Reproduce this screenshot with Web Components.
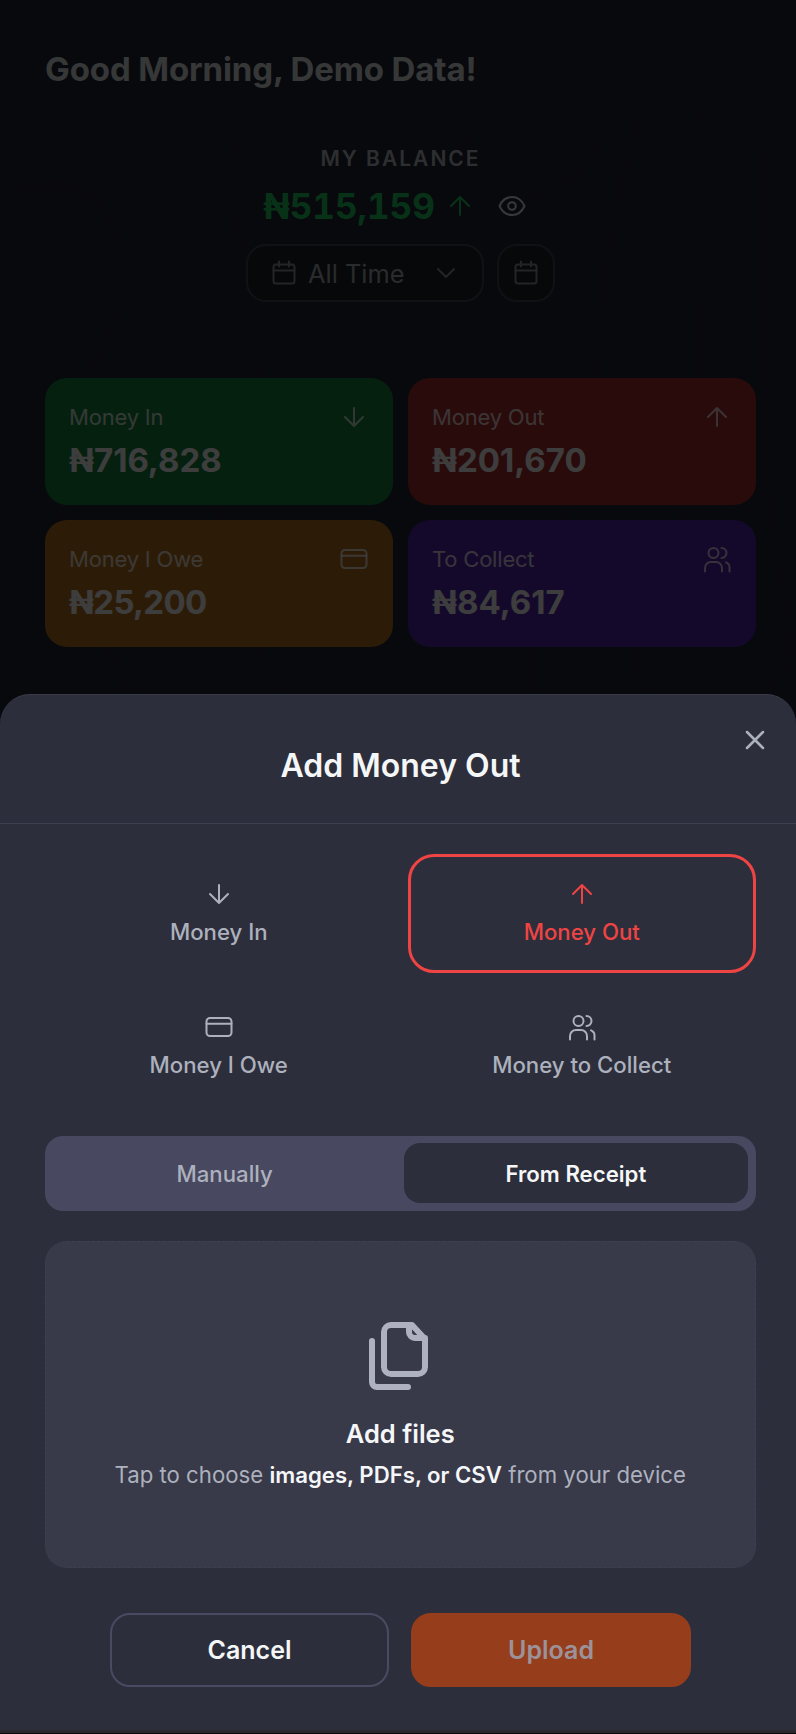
<!DOCTYPE html>
<html lang="en">
<head>
<meta charset="utf-8">
<title>Add Money Out</title>
<style>
  html, body { margin: 0; padding: 0; background: #222537; }
  body { font-family: Inter, "Liberation Sans", sans-serif; }
</style>
</head>
<body>
<fin-app></fin-app>

<script>
const ICONS = {
  "arrow-down": `<path d="M14 5v18M5 14l9 9 9-9"/>`,
  "arrow-up": `<path d="M14 23V5M5 14l9-9 9 9"/>`,
  "card": `<rect x="1.500" y="5" width="25" height="18" rx="3.500"/><path d="M1.500 10.800h25"/>`,
  "users": `<circle cx="10.500" cy="8" r="5"/><path d="M2 26.500v-3.500a6 6 0 0 1 6-6h5a6 6 0 0 1 6 6v3.500"/><path d="M18.500 3a5 5 0 0 1 0 10"/><path d="M23 17.400a5.500 5.500 0 0 1 3.500 5.200v3.900"/>`,
  "calendar": `<rect x="3.500" y="5.500" width="21" height="19" rx="2.500"/><path d="M3.500 11.500h21M9 2.500v5M19 2.500v5"/>`,
  "chevron": `<path d="M6 10l8 8 8-8"/>`,
  "eye": `<path d="M1.500 14C4 8.500 8.500 5 14 5s10 3.500 12.500 9c-2.500 5.500-7 9-12.500 9S4 19.500 1.500 14z"/><circle cx="14" cy="14" r="3.800"/>`,
  "close": `<path d="M6 6l16 16M22 6 6 22"/>`
};

class UiIcon extends HTMLElement {
  connectedCallback() {
    const name = this.getAttribute("name");
    const weight = this.getAttribute("weight") || 2;
    this.attachShadow({ mode: "open" }).innerHTML = `
      <style>
        :host { display: block; width: 28px; height: 28px; flex: none; color: inherit; }
        svg { display: block; width: 100%; height: 100%; fill: none; stroke: currentColor; stroke-linecap: round; stroke-linejoin: round; }
      </style>
      <svg viewBox="0 0 28 28" stroke-width="${weight}">${ICONS[name]}</svg>`;
  }
}
customElements.define("ui-icon", UiIcon);

class StatCard extends HTMLElement {
  connectedCallback() {
    const label = this.getAttribute("label");
    const icon = this.getAttribute("icon");
    const amount = this.getAttribute("amount");
    this.attachShadow({ mode: "open" }).innerHTML = `
      <style>
        :host { display: block; height: 127px; box-sizing: border-box; padding: 25px 25px 24px 24px; border-radius: 22px; background: var(--tone); color: #fff; }
        .top { display: flex; justify-content: space-between; align-items: center; height: 28px; }
        .label { font-size: 22px; line-height: 26px; color: rgba(255,255,255,.8); letter-spacing: -.2px; }
        .amount { margin-top: 9px; font-size: 33px; line-height: 40px; font-weight: 700; color: #f4f4f5; letter-spacing: var(--track, 0); }
        ui-icon { color: rgba(255,255,255,.75); }
      </style>
      <div class="top"><span class="label">${label}</span><ui-icon name="${icon}"></ui-icon></div>
      <div class="amount">${amount}</div>`;
  }
}
customElements.define("stat-card", StatCard);

class DashBoard extends HTMLElement {
  constructor() {
    super();
    this.attachShadow({ mode: "open" }).innerHTML = `
      <style>
        :host { display: block; padding: 49px 40px 0 45px; }
        h1 { margin: 0; font-size: 33px; line-height: 40px; font-weight: 700; color: #d8d9dc; letter-spacing: -.12px; }
        .center { display: flex; flex-direction: column; align-items: center; }
        .caption { margin-top: 57px; font-size: 21px; line-height: 26px; font-weight: 600; letter-spacing: 2px; color: #b4b6bc; }
        .balance { display: flex; align-items: center; margin-top: 13px; height: 42px; }
        .value { font-size: 35px; line-height: 42px; font-weight: 700; color: #22c55e; font-variant-numeric: tabular-nums; }
        .balance .up { color: #22c55e; margin-left: 11px; }
        .balance .eye { color: #dcdde2; padding: 0 12px; margin-left: 12px; }
        .filters { display: flex; gap: 13px; margin-top: 17px; }
        .pill { display: flex; align-items: center; height: 58px; box-sizing: border-box; border: 2px solid #444654; border-radius: 20px; background: #1e2029; color: #a8aab0; }
        .pill ui-icon { color: #8e9096; }
        .select { width: 238px; padding: 0 22px; }
        .select span { margin-left: 10px; flex: 1; font-size: 25.400px; line-height: 32px; padding-top: 1px; }
        .square { width: 58px; justify-content: center; }
        .grid { display: grid; grid-template-columns: 347.500px 347.500px; gap: 15px 15.500px; margin-top: 76px; }
      </style>
      <h1>Good Morning, Demo Data!</h1>
      <div class="center">
        <div class="caption">MY BALANCE</div>
        <div class="balance">
          <span class="value">₦515,159</span>
          <ui-icon class="up" name="arrow-up"></ui-icon>
          <ui-icon class="eye" name="eye"></ui-icon>
        </div>
        <div class="filters">
          <div class="pill select"><ui-icon name="calendar"></ui-icon><span>All Time</span><ui-icon name="chevron"></ui-icon></div>
          <div class="pill square"><ui-icon name="calendar"></ui-icon></div>
        </div>
      </div>
      <div class="grid">
        <stat-card style="--tone:#15803d" label="Money In" icon="arrow-down" amount="₦716,828"></stat-card>
        <stat-card style="--tone:#a62c2c" label="Money Out" icon="arrow-up" amount="₦201,670"></stat-card>
        <stat-card style="--tone:#b06f1e;--track:-.7px" label="Money I Owe" icon="card" amount="₦25,200"></stat-card>
        <stat-card style="--tone:#5426ab" label="To Collect" icon="users" amount="₦84,617"></stat-card>
      </div>`;
  }
}
customElements.define("dash-board", DashBoard);

class TypeTile extends HTMLElement {
  connectedCallback() {
    const icon = this.getAttribute("icon");
    const label = this.getAttribute("label");
    this.attachShadow({ mode: "open" }).innerHTML = `
      <style>
        :host { display: flex; flex-direction: column; align-items: center; justify-content: center; gap: 11px; height: 119px; box-sizing: border-box; padding-bottom: 2px; border: 3.500px solid transparent; border-radius: 26px; color: #adb1bd; }
        :host([selected]) { border-color: #ef4444; color: #ef4444; }
        span { font-size: 22.200px; line-height: 26px; font-weight: 500; }
      </style>
      <ui-icon name="${icon}"></ui-icon>
      <span>${label}</span>`;
  }
}
customElements.define("type-tile", TypeTile);

class SegControl extends HTMLElement {
  constructor() {
    super();
    this.attachShadow({ mode: "open" }).innerHTML = `
      <style>
        :host { display: grid; grid-template-columns: 1fr 1fr; gap: 8px; padding: 7px 8px 8px; height: 75px; box-sizing: border-box; border-radius: 18px; background: #484860; }
        div { display: flex; align-items: center; justify-content: center; border-radius: 16px; font-size: 22.200px; font-weight: 500; color: #adb1bd; }
        .on { background: #2c2e3b; color: #f5f6f8; font-weight: 600; }
      </style>
      <div>Manually</div>
      <div class="on">From Receipt</div>`;
  }
}
customElements.define("seg-control", SegControl);

class DropZone extends HTMLElement {
  constructor() {
    super();
    this.attachShadow({ mode: "open" }).innerHTML = `
      <style>
        :host { display: flex; flex-direction: column; align-items: center; height: 327px; box-sizing: border-box; padding-top: 78px; border: 1px dashed #3e3f50; border-radius: 22px; background: #383949; }
        svg { display: block; width: 62px; height: 72px; margin-left: -2px; fill: none; stroke: #aeb2c0; stroke-width: 6; stroke-linecap: round; stroke-linejoin: round; }
        .head { margin-top: 27px; font-size: 25.500px; line-height: 30px; font-weight: 600; color: #f5f6f8; }
        .hint { margin-top: 12px; font-size: 22.200px; line-height: 28px; color: #adb1bd; }
        b { font-weight: 600; color: #f5f6f8; }
      </style>
      <svg viewBox="0 0 62 72">
        <path d="M23 5h21l13 14v28a7 7 0 0 1-7 7H23a7 7 0 0 1-7-7V12a7 7 0 0 1 7-7z"/>
        <path d="M41 5v7a6 6 0 0 0 6 6h10"/>
        <path d="M4 21v41a5 5 0 0 0 5 5h31"/>
      </svg>
      <div class="head">Add files</div>
      <div class="hint">Tap to choose <b>images, PDFs, or CSV</b> from your device</div>`;
  }
}
customElements.define("drop-zone", DropZone);

class SheetButton extends HTMLElement {
  constructor() {
    super();
    this.attachShadow({ mode: "open" }).innerHTML = `
      <style>
        :host { display: flex; align-items: center; justify-content: center; width: 279.500px; height: 74px; box-sizing: border-box; border: 2px solid #4a4a63; border-radius: 20px; font-size: 25px; font-weight: 600; color: #f5f6f8; }
        :host([primary]) { background: #963d1c; border-color: #963d1c; color: #9c929a; }
      </style>
      <slot></slot>`;
  }
}
customElements.define("sheet-button", SheetButton);

class BottomSheet extends HTMLElement {
  constructor() {
    super();
    this.attachShadow({ mode: "open" }).innerHTML = `
      <style>
        :host { display: block; position: absolute; left: 0; right: 0; top: 694px; background: #2c2e3b; border-top: 1px solid #3a3b4a; border-bottom: 3px solid #29292d; border-radius: 30px 30px 0 0; }
        header { position: relative; padding: 51px 0 37px 5px; border-bottom: 1px solid #3e3f50; text-align: center; }
        h2 { margin: 0; font-size: 32px; line-height: 40px; font-weight: 600; color: #f5f6f8; }
        .close { position: absolute; top: 31px; right: 27px; color: #adb1bd; }
        .body { padding: 30px 40px 43px 45px; }
        .tiles { display: grid; grid-template-columns: 347.500px 347.500px; gap: 14px 15.500px; }
        seg-control { margin-top: 30px; width: 710.500px; }
        drop-zone { margin-top: 30px; width: 710.500px; }
        .actions { display: flex; justify-content: center; gap: 22px; margin-top: 45px; width: 710.500px; }
      </style>
      <header>
        <h2>Add Money Out</h2>
        <ui-icon class="close" name="close" weight="2.500"></ui-icon>
      </header>
      <div class="body">
        <div class="tiles">
          <type-tile icon="arrow-down" label="Money In"></type-tile>
          <type-tile icon="arrow-up" label="Money Out" selected></type-tile>
          <type-tile icon="card" label="Money I Owe"></type-tile>
          <type-tile icon="users" label="Money to Collect"></type-tile>
        </div>
        <seg-control></seg-control>
        <drop-zone></drop-zone>
        <div class="actions">
          <sheet-button>Cancel</sheet-button>
          <sheet-button primary>Upload</sheet-button>
        </div>
      </div>`;
  }
}
customElements.define("bottom-sheet", BottomSheet);

class FinApp extends HTMLElement {
  constructor() {
    super();
    this.attachShadow({ mode: "open" }).innerHTML = `
      <style>
        :host { display: block; position: relative; height: 1734px; overflow: hidden; background: #222537; font-family: Inter, "Liberation Sans", sans-serif; }
        .waves { position: absolute; left: 0; top: 100px; width: 796px; height: 590px; fill: none; stroke: #1c1f2e; stroke-width: 8; opacity: .25; }
        dash-board { position: relative; }
        .scrim { position: absolute; inset: 0; background: rgba(0,0,0,.75); }
      </style>
      <svg class="waves" viewBox="0 0 796 590">
        <path d="M20 90C120 60 150 180 90 270S60 470 130 590"/>
        <path d="M240 40C200 130 300 190 250 300S210 480 280 590"/>
        <path d="M470 30C440 110 560 130 600 40"/>
        <path d="M640 20C590 160 610 300 560 420S540 540 530 590"/>
        <path d="M700 10C680 170 730 320 670 460S650 560 650 590"/>
        <path d="M760 30C780 180 750 330 780 470S770 560 770 590"/>
      </svg>
      <dash-board></dash-board>
      <div class="scrim"></div>
      <bottom-sheet></bottom-sheet>`;
  }
}
customElements.define("fin-app", FinApp);
</script>
</body>
</html>
